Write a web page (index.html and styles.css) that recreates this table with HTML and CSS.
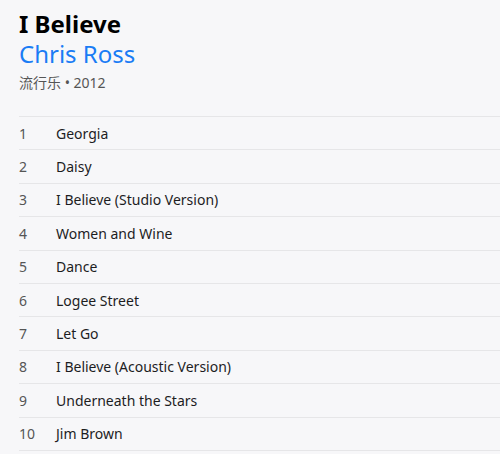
FILE: index.html
```html
<!DOCTYPE html>
<html lang="zh">
<head>
    <meta charset="UTF-8" />
    <meta name="viewport" content="width=device-width, initial-scale=1" />
    <title>I Believe - Chris Ross</title>
    <link rel="stylesheet" href="styles.css">
</head>
<body>
    <header class="album-head">
        <h1 class="album-title">I Believe</h1>
        <div class="album-artist">Chris Ross</div>
        <div class="album-meta">流行乐 • 2012</div>
    </header>

    <ol class="track-list">
        <li class="track"><span class="track-no">1</span><span class="track-name">Georgia</span></li>
        <li class="track"><span class="track-no">2</span><span class="track-name">Daisy</span></li>
        <li class="track"><span class="track-no">3</span><span class="track-name">I Believe (Studio Version)</span></li>
        <li class="track"><span class="track-no">4</span><span class="track-name">Women and Wine</span></li>
        <li class="track"><span class="track-no">5</span><span class="track-name">Dance</span></li>
        <li class="track"><span class="track-no">6</span><span class="track-name">Logee Street</span></li>
        <li class="track"><span class="track-no">7</span><span class="track-name">Let Go</span></li>
        <li class="track"><span class="track-no">8</span><span class="track-name">I Believe (Acoustic Version)</span></li>
        <li class="track"><span class="track-no">9</span><span class="track-name">Underneath the Stars</span></li>
        <li class="track"><span class="track-no">10</span><span class="track-name">Jim Brown</span></li>
    </ol>
</body>
</html>
```

FILE: styles.css
```css
body {
    margin: 0;
    background: #f7f7f9;
    font-family: "Noto Sans", "Noto Sans CJK SC", sans-serif;
    color: #1d1d1f;
}
.album-head {
    padding: 9px 19px 0;
}
.album-title {
    margin: 0;
    font-size: 24px;
    font-weight: 700;
    line-height: 30px;
    color: #000;
}
.album-artist {
    font-size: 24px;
    line-height: 30px;
    color: #1a7cf5;
}
.album-meta {
    margin-top: 4px;
    font-size: 14px;
    line-height: 20px;
    color: #555;
}
.track-list {
    list-style: none;
    margin: 23px 0 0 19px;
    padding: 0;
    border-top: 1px solid #e6e6e8;
}
.track {
    display: flex;
    align-items: center;
    height: 32.4px;
    border-bottom: 1px solid #e6e6e8;
    font-size: 14px;
}
.track-no {
    width: 37px;
    color: #555;
}
.track-name {
    color: #1d1d1f;
}
```
